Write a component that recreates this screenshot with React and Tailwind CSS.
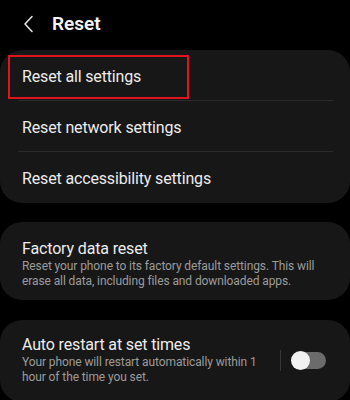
import React from 'react'

function Row({ title, last }) {
    return (
        <div className="relative h-[51px] flex items-center pl-[22px] pt-[3px]">
            <span className="text-[16px] tracking-[-0.15px] text-[#ececec]">
                {title}
            </span>
            {!last ? (
                <div className="absolute bottom-0 left-[18px] right-[17px] h-px bg-[#2b2b2b]" />
            ) : null}
        </div>
    )
}

function Toggle() {
    return (
        <div className="flex items-center gap-[11px]">
            <div className="w-px h-[21px] bg-[#383838]" />
            <div className="relative w-[34px] h-[17px] rounded-full bg-[#6b6b6b]">
                <div className="absolute left-[-1px] top-[-1px] w-[19px] h-[19px] rounded-full bg-[#f2f2f2]" />
            </div>
        </div>
    )
}

export default function App() {
    return (
        <div
            className="relative w-[350px] h-[400px] overflow-hidden bg-black"
            style={{ fontFamily: 'Roboto, "Noto Sans", sans-serif' }}
        >
            <div className="h-[50px] flex items-center pb-[2px]">
                <svg
                    className="ml-[22px]"
                    width="14"
                    height="18"
                    viewBox="0 0 14 18"
                    fill="none"
                    stroke="#e0e0e0"
                    strokeWidth="1.6"
                    strokeLinecap="round"
                    strokeLinejoin="round"
                >
                    <polyline points="10,1.5 3,9 10,16.5" />
                </svg>
                <h1 className="ml-[16px] text-[19px] font-semibold text-[#f4f4f4]">
                    Reset
                </h1>
            </div>

            <div className="rounded-[22px] bg-[#171717]">
                <Row title="Reset all settings" />
                <Row title="Reset network settings" />
                <Row title="Reset accessibility settings" last />
            </div>

            <div className="mt-[19px] rounded-[22px] bg-[#171717] pl-[22px] pr-[20px] pt-[17px] pb-[11px]">
                <div className="text-[16px] leading-[20px] tracking-[-0.15px] text-[#ececec]">
                    Factory data reset
                </div>
                <div className="text-[12px] leading-[15px] tracking-[-0.1px] text-[#9c9c9c]">
                    Reset your phone to its factory default settings. This will
                    erase all data, including files and downloaded apps.
                </div>
            </div>

            <div className="mt-[20px] rounded-[22px] bg-[#171717] pl-[22px] pr-[24px] pt-[15px] pb-[17px] flex items-center">
                <div className="flex-1">
                    <div className="text-[16px] leading-[20px] tracking-[-0.15px] text-[#ececec]">
                        Auto restart at set times
                    </div>
                    <div className="text-[12px] leading-[15px] tracking-[-0.1px] text-[#9c9c9c] pr-[10px]">
                        Your phone will restart automatically within 1 hour of
                        the time you set.
                    </div>
                </div>
                <Toggle />
            </div>

            <div className="absolute left-[8px] top-[55px] w-[181px] h-[44px] border-2 border-[#e0141e]" />
        </div>
    )
}
